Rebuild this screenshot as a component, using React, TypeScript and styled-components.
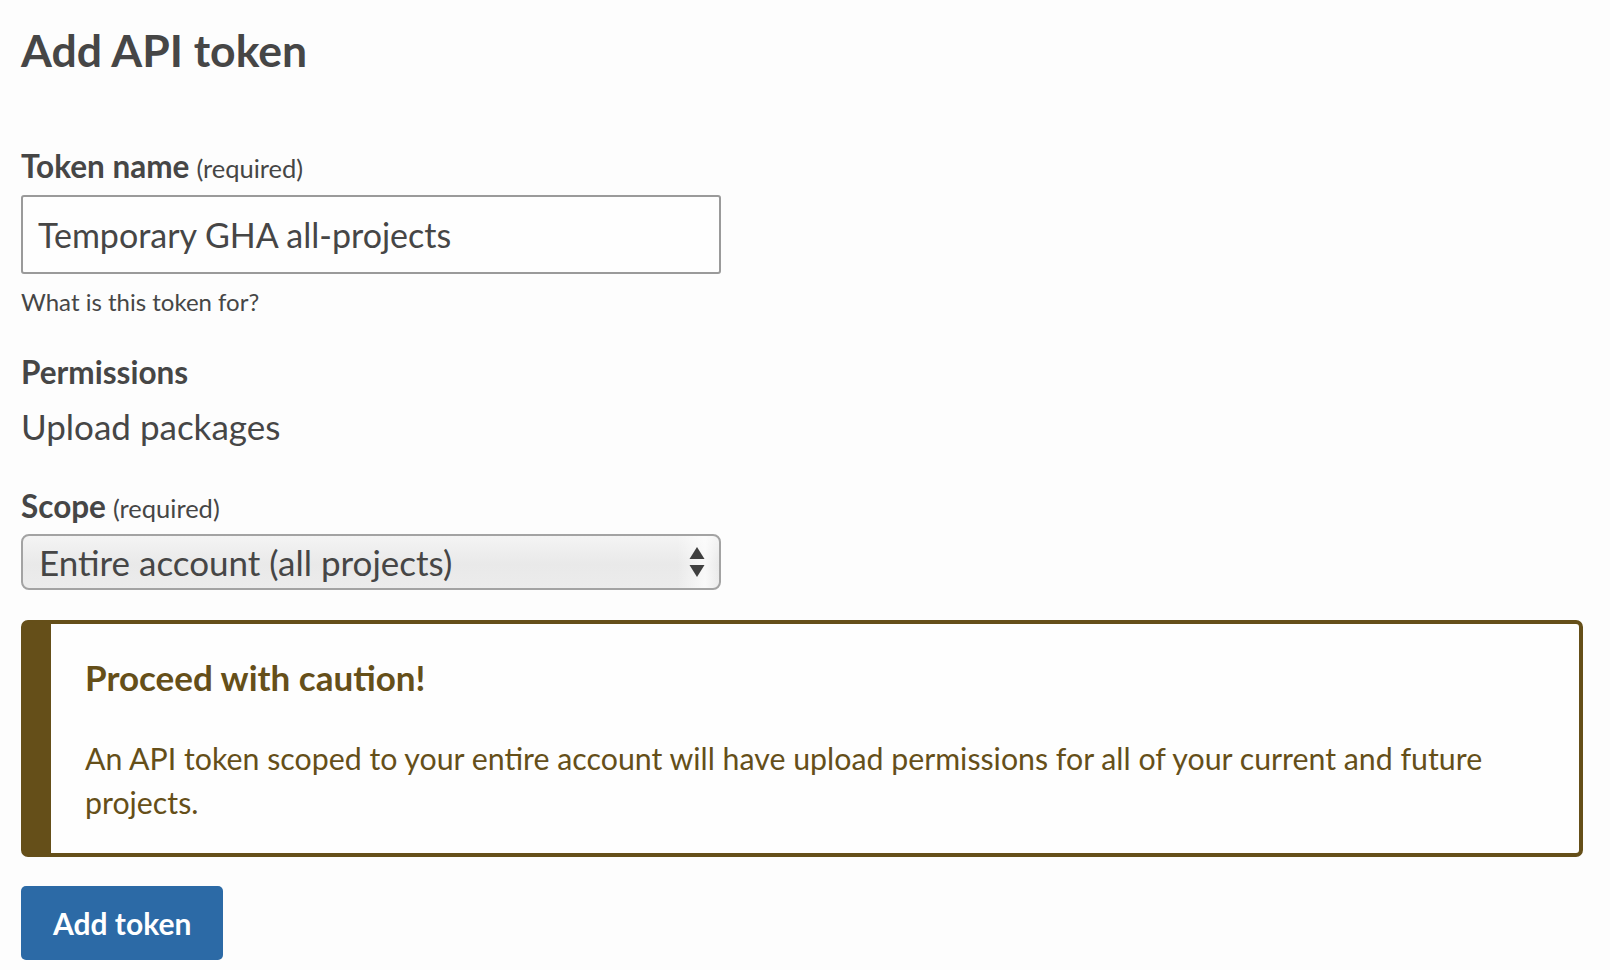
import React from "react";
import styled, { createGlobalStyle } from "styled-components";

const GlobalStyle = createGlobalStyle`
  html, body {
    margin: 0;
    padding: 0;
    background: #fdfdfd;
  }
  body {
    font-family: Lato, "Liberation Sans", sans-serif;
    color: #464646;
  }
`;

const Page = styled.main`
  padding: 0 20px 0 21px;
  width: 1562px;
`;

const Title = styled.h1`
  margin: 0;
  padding-top: 22px;
  font-size: 44.5px;
  line-height: 56px;
  font-weight: 700;
  color: #464646;
`;

const Field = styled.div<{ $top: number }>`
  margin-top: ${(p) => p.$top}px;
  display: flex;
  flex-direction: column;
`;

const Label = styled.label`
  font-size: 31.5px;
  line-height: 36px;
  font-weight: 700;
  color: #464646;
`;

const Required = styled.span`
  font-size: 25.5px;
  font-weight: 400;
  margin-left: 7px;
`;

const TextInput = styled.input`
  box-sizing: border-box;
  width: 700px;
  height: 79px;
  margin-top: 9px;
  padding: 0 15px;
  border: 2px solid #9a9a9a;
  border-radius: 3px;
  background: #fefefe;
  font-family: Lato, "Liberation Sans", sans-serif;
  font-size: 34px;
  color: #464646;
  outline: none;
`;

const Help = styled.p`
  margin: 13px 0 0;
  font-size: 24px;
  line-height: 30px;
  color: #464646;
`;

const Value = styled.p`
  margin: 14px 0 0;
  font-size: 35px;
  line-height: 44px;
  color: #464646;
`;

const SelectBox = styled.div`
  box-sizing: border-box;
  width: 700px;
  height: 56px;
  margin-top: 8px;
  padding: 0 14px 0 16px;
  display: flex;
  align-items: center;
  justify-content: space-between;
  border: 2px solid #a3a3a3;
  border-radius: 8px;
  background: linear-gradient(to right, transparent 94%, rgba(255, 255, 255, 0.7) 98%, transparent),
    linear-gradient(to bottom, #f4f4f4, #e9e9e9 55%, #ececec);
  font-size: 35px;
  color: #464646;
`;

const Callout = styled.section`
  box-sizing: border-box;
  margin-top: 30px;
  width: 1562px;
  height: 237px;
  padding: 31px 30px 0 34px;
  border: 4px solid #654f19;
  border-left-width: 30px;
  border-radius: 7px;
  background: #fefefe;
  color: #654f19;
`;

const CalloutTitle = styled.h3`
  margin: 0;
  font-size: 35px;
  line-height: 44px;
  font-weight: 700;
`;

const CalloutText = styled.p`
  margin: 37px 0 0;
  font-size: 30.3px;
  line-height: 44px;
`;

const Button = styled.button`
  margin-top: 29px;
  height: 74px;
  padding: 0 32px;
  border: none;
  border-radius: 5px;
  background: #2c6aa6;
  color: #ffffff;
  font-family: Lato, "Liberation Sans", sans-serif;
  font-size: 30px;
  font-weight: 700;
`;

function SortArrows() {
  return (
    <svg width="16" height="32" viewBox="0 0 16 32">
      <polygon points="8,1 15.5,13 0.5,13" fill="#3f3f3f" />
      <polygon points="0.5,19 15.5,19 8,31" fill="#3f3f3f" />
    </svg>
  );
}

export default function App() {
  return (
    <>
      <GlobalStyle />
      <Page>
        <Title>Add API token</Title>

        <Field $top={70}>
          <Label>
            Token name<Required>(required)</Required>
          </Label>
          <TextInput defaultValue="Temporary GHA all-projects" readOnly />
          <Help>What is this token for?</Help>
        </Field>

        <Field $top={37}>
          <Label>Permissions</Label>
          <Value>Upload packages</Value>
        </Field>

        <Field $top={40}>
          <Label>
            Scope<Required>(required)</Required>
          </Label>
          <SelectBox>
            <span>Entire account (all projects)</span>
            <SortArrows />
          </SelectBox>
        </Field>

        <Callout>
          <CalloutTitle>Proceed with caution!</CalloutTitle>
          <CalloutText>
            An API token scoped to your entire account will have upload permissions for all of your current and future
            projects.
          </CalloutText>
        </Callout>

        <Button>Add token</Button>
      </Page>
    </>
  );
}
